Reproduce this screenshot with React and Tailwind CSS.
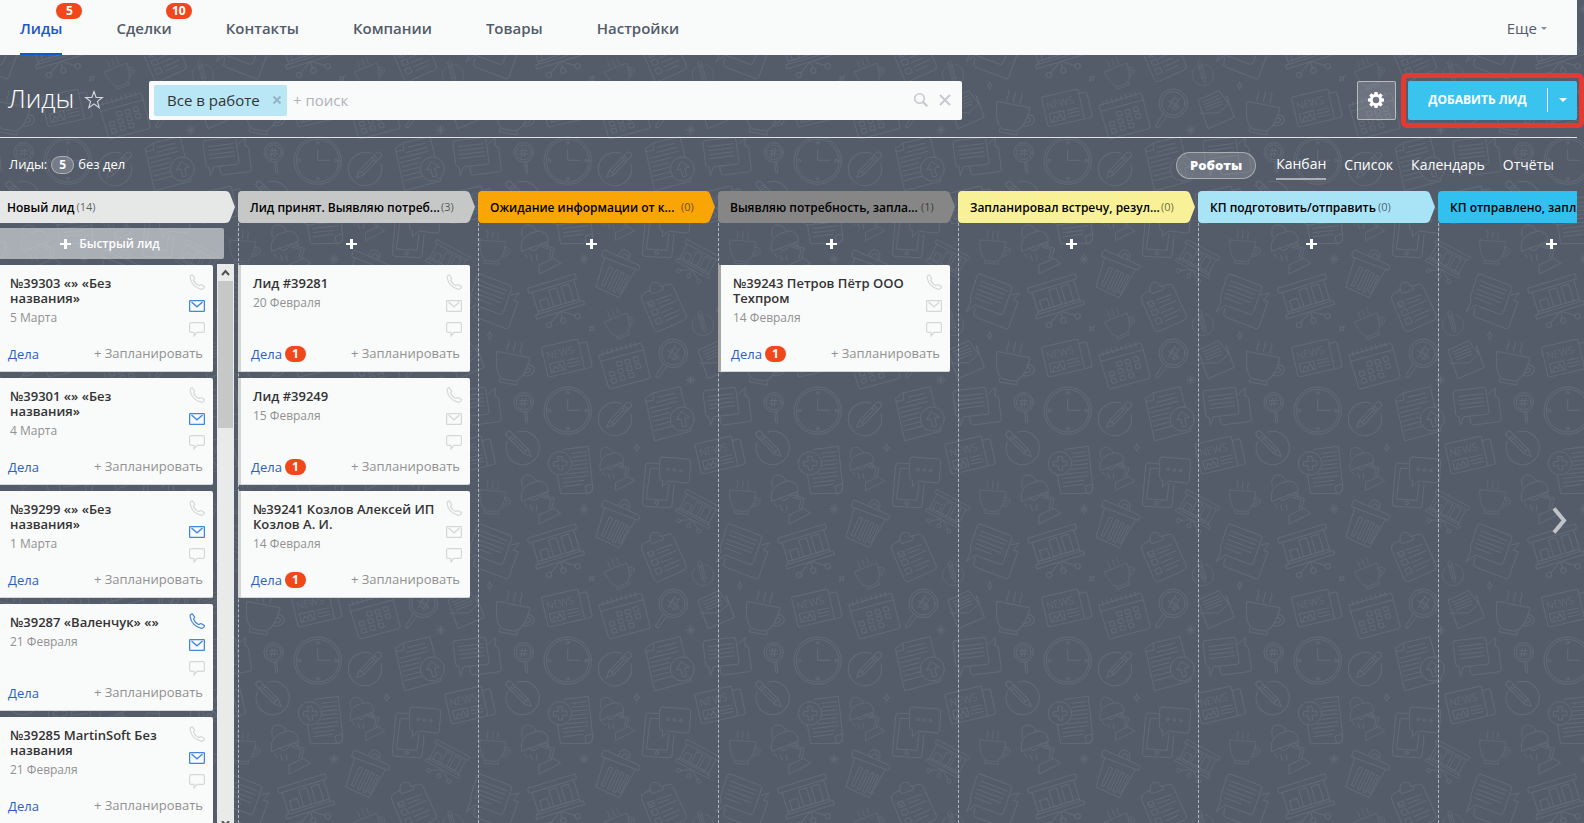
import clsx from "clsx";

const columns = [
  {
    key: "new",
    title: "Новый лид",
    count: 14,
    fill: "#e6e7e7",
    cards: [
      { id: 39303, title: "№39303 «» «Без названия»", date: "5 Марта", mail: true },
      { id: 39301, title: "№39301 «» «Без названия»", date: "4 Марта", mail: true },
      { id: 39299, title: "№39299 «» «Без названия»", date: "1 Марта", mail: true },
      { id: 39287, title: "№39287 «Валенчук» «»", date: "21 Февраля", mail: true, phone: true },
      { id: 39285, title: "№39285 MartinSoft Без названия", date: "21 Февраля", mail: true },
    ],
  },
  {
    key: "accepted",
    title: "Лид принят. Выявляю потреб...",
    long: true,
    count: 3,
    fill: "#c6c7c7",
    stripe: "border-l-[#d3d4d4]",
    cards: [
      { id: 39281, title: "Лид #39281", date: "20 Февраля", todo: 1 },
      { id: 39249, title: "Лид #39249", date: "15 Февраля", todo: 1 },
      { id: 39241, title: "№39241 Козлов Алексей ИП Козлов А. И.", date: "14 Февраля", todo: 1 },
    ],
  },
  { key: "waiting", title: "Ожидание информации от к...", long: true, count: 0, fill: "#faa506", cards: [] },
  {
    key: "needs",
    title: "Выявляю потребность, запла...",
    long: true,
    count: 1,
    fill: "#868686",
    stripe: "border-l-[#a5a5a5]",
    cards: [{ id: 39243, title: "№39243 Петров Пётр ООО Техпром", date: "14 Февраля", todo: 1 }],
  },
  { key: "meeting", title: "Запланировал встречу, резул...", long: true, count: 0, fill: "#f8f197", cards: [] },
  { key: "offer", title: "КП подготовить/отправить", count: 0, fill: "#a8e3f6", cards: [] },
  { key: "sent", title: "КП отправлено, запл...", long: true, count: 0, fill: "#30c1f1", cards: [] },
];

const nav = [
  { label: "Лиды", badge: 5, active: true },
  { label: "Сделки", badge: 10 },
  { label: "Контакты" },
  { label: "Компании" },
  { label: "Товары" },
  { label: "Настройки" },
];

/* ---------- Background doodles ---------- */
function News({ transform }) {
  return (
    <g transform={transform}>
      <path d="M4 0H108a4 4 0 0 1 4 4V92H8a8 8 0 0 1-8-8V4a4 4 0 0 1 4-4ZM112 14h20a4 4 0 0 1 4 4V84a8 8 0 0 1-8 8h-20" />
      <path d="M12 54h44v26H12ZM18 78l8-14 8 10 8-14 8 18M66 56h36M66 66h36M66 76h36" />
      <text x="9" y="40" fontSize="31" fontWeight="300" fill="#656e79" stroke="none">
        NEWS
      </text>
    </g>
  );
}

function Cup({ transform }) {
  return (
    <g transform={transform}>
      <path d="M2 0H98a3 3 0 0 1 3 4C98 40 90 72 66 78H34C12 72 4 40 0 4a3 3 0 0 1 2-4ZM24 78v10h54v-10" />
      <path d="M97 22c34-8 30 38-8 34M98 31c18-4 14 18-6 16M30-8c-8-10 6-18-2-30M50-8c-8-10 6-18-2-30M70-8c-8-10 6-18-2-30" />
    </g>
  );
}

function Lamp({ transform }) {
  return (
    <g transform={transform}>
      <path d="M2 78C-4 50 10 34 26 26l26-8c20 0 30 14 30 30ZM4 36C-2 10 8 0 20 0s22 8 26 18M26 68c0 12 24 12 34-12M72 54l10 12M72 54c6-8 14 6 8 10M62 66l28 8-6 26M62 60l38 10-8 30M54 146v-26l44-20 20 14ZM10 86l8 10M28 90l6 16M46 90l2 16" />
    </g>
  );
}

function Board({ transform }) {
  return (
    <g transform={transform}>
      <path d="M4 0H146a4 4 0 0 1 4 4v8a4 4 0 0 1-4 4H4a4 4 0 0 1-4-4V4a4 4 0 0 1 4-4ZM10 16V84M140 16V84M4 84H146a4 4 0 0 1 4 4v8H0v-8a4 4 0 0 1 4-4ZM10 76H140" />
      <path d="M24 46h24v30H24ZM60 24h24v52H60ZM98 24h24v52H98ZM75 98v18M70 98l-34 22M80 98l34 22" />
      <circle cx="75" cy="124" r="8" />
      <circle cx="30" cy="124" r="8" />
      <circle cx="120" cy="124" r="8" />
    </g>
  );
}

function Pencil({ transform }) {
  return (
    <g transform={transform}>
      <circle r="50" strokeDasharray="270 44" strokeDashoffset="56" />
      <path
        fill="#545c6a"
        d="M-9-58v74L0 36l9-20v-74a9 9 0 0 0-18 0ZM-9 14h18M-9-40H9M-9-48H9M0-36V12"
      />
    </g>
  );
}

function Doodles() {
  return (
    <g>
      <circle cx="131" cy="757" r="29" />
      <circle cx="131" cy="757" r="22" />
      <path d="M127 744l-3 26M136 744l-3 26M118 752h26M118 762h26M134 788l3 28a3 3 0 0 0 6-1l-3-28" />

      <circle cx="263" cy="782" r="71" />
      <circle cx="263" cy="782" r="64" />
      <path d="M263 748v33h38" />
      <circle cx="263" cy="728" r="4" />
      <circle cx="263" cy="836" r="4" />
      <circle cx="208" cy="782" r="4" />
      <circle cx="318" cy="782" r="4" />

      <Pencil transform="translate(405 807) rotate(44)" />
      <Pencil transform="translate(128 144) rotate(-45)" />
      <Pencil transform="translate(669 525) rotate(-15) scale(.64)" />

      <path d="M497 745l22-16 81-19 33 133-108 29ZM497 755l25-5-3-20M534 742l50-12M530 757l60-15M508 775l86-21M512 788l60-15M515 801l52-13M518 814l48-12M521 828l48-12M524 842l54-14" />
      <circle cx="607" cy="807" r="36" fill="#545c6a" />
      <path d="M603 785l-13 25 12-3 6 24 12-3-6-24 13-2Z" />

      <path d="M674 722l88-10q4 0 5 5l10 68q0 7-6 8l-70 7-10 27-4-26q-8 0-10-8l-8-63q0-6 5-8ZM685 740l74-9M686 752l74-9M688 764l74-9M690 776l74-9M774 733l22-20-1 25q10-1 11 8l8 62q0 6-6 7l-79 10q-6 0-7-8l-3-17" />

      <path d="M252 148l73-9 13 120M338 258q0 20-14 22l-82 1-10-57M338 266q0 14-18 16l-5-24 22-6M275 160l44-5M277 172l44-5M278 184l44-5M278 196l44-5M275 208l48-5M262 222l62-7M248 236l76-9M250 248l62-7M250 260l58-7" />
      <circle cx="240" cy="190" r="35" fill="#545c6a" />
      <path d="M234 169h12l1 15 14-1v13l-14 1 1 13h-12l-2-13-14 1v-13l14-1Z" />

      <Lamp transform="translate(359 142) scale(.88)" />
      <Lamp transform="translate(123 225)" />

      <path d="M540 191l-35-2q-7 0-8 8l-10 114q0 7 7 8l75 4q7 0 7-8l6-60M535 206l-24-1-12 92 62 4 6-50" />
      <circle cx="530" cy="309" r="5" />
      <path
        fill="#545c6a"
        d="M547 171l77 6q9 1 8 9l-4 56q-1 8-9 7l-54-6-18 17 1-18q-9-1-9-9l0-53q0-9 8-9Z"
      />
      <circle cx="564" cy="208" r="4" />
      <circle cx="583" cy="210" r="4" />
      <circle cx="602" cy="212" r="4" />

      <News transform="translate(644 133) rotate(-13)" />
      <News transform="translate(184 592) rotate(-13)" />

      <Cup transform="translate(749 270) rotate(4) scale(.78)" />
      <Cup transform="translate(51 604) rotate(11)" />
      <Cup transform="translate(373 516) rotate(-22) scale(.72)" />

      <path d="M376 301l100 44q5 3 3 8l-4 8-110-41 3-15q3-6 8-4ZM374 323l-26 88 70 32 48-84M388 352l-24 54 8 4 26-54ZM408 360l-26 56 8 4 26-56ZM424 368l-26 56 8 4 26-56ZM440 376l-26 50 8 4 24-50ZM416 316q6-20 20-16 20 6 12 28M424 320q6-12 14-8 10 6 4 14" />

      <Board transform="translate(142 415) rotate(-17)" />
      <Board transform="translate(620 268) rotate(28) scale(.76)" />

      <path d="M750 372l90 34q7 3 5 9l-25 73q-3 7-10 5l-75-28-26 20 14-32-2-12 20-62q3-8 9-7ZM752 393l80 30M748 405l76 28M742 418l76 28M738 430l74 28M734 443l50 19M844 435l24-6-18 22 14 4-28 78q-2 5-8 3l-90-34q-8-4-7-10l4-18" />

      <path d="M510 421l-18 9q-11 7-7 19l38 90q4 8 14 5l76-34q8-5 6-13l-40-88q-4-8-14-6l-20 6M510 421q-2-24 15-24 15 0 15 12 14-1 10 10l-34 12q-8-4-6-10" />
      <path d="M503 458l15-6 7 15-15 6ZM514 482l15-6 7 15-15 6ZM525 508l15-6 7 15-15 6ZM505 460l8 8 8-12M528 450l46-16M534 460l34-12M538 474l50-22M544 488l34-14M552 500l46-20M558 512l36-16" />

      <path d="M357 616l122-36q5 0 7 5l24 94q1 5-4 7l-112 30q-6 1-8-4l-28-92q-1-3-1-4ZM362 634l126-34M366 604l4 12M380 600l4 12M394 596l4 12M408 592l4 12M422 588l4 12M436 584l4 12M450 580l4 12M464 577l4 12" />
      <path d="M410 636l13-3 4 13-13 3ZM435 630l13-3 4 13-13 3ZM460 622l13-3 4 13-13 3ZM388 666l13-3 4 13-13 3ZM414 658l13-3 4 13-13 3ZM440 650l13-3 4 13-13 3ZM466 643l13-3 4 13-13 3ZM394 687l13-3 4 13-13 3ZM420 679l13-3 4 13-13 3ZM446 671l13-3 4 13-13 3Z" />

      <circle cx="580" cy="610" r="43" />
      <circle cx="580" cy="610" r="35" />
      <path d="M596 602l-12-10-10 10 22 16-10 12-18-14M586 588l-22 36M600 594l-22 36M564 602l34 24M549 643l-22 34q-1 8 8 6l25-34" />

      <path d="M656 600l-1 4 29 82 79-34-24-64M656 600l60-28 30 40-30 26-56 2M668 606l48-20M672 614l50-20M676 622l50-20M680 630l46-18M740 588l6 22" />

      <path d="M470 132l3 8 6 3-6 3-3 8-3-8-6-3 6-3ZM779 546l3 8 5 3-5 3-3 9-3-9-5-3 5-3ZM343 528l-4 8 2 6-6-3-7 5 3-8-2-6 6 2Z" />
      <path d="M312 314v26M299 327h26M303 318l18 18M321 318l-18 18M632 677v26M619 690h26M623 681l18 18M641 681l-18 18" />
    </g>
  );
}

function Backdrop() {
  return (
    <svg className="absolute inset-0 h-full w-full" aria-hidden="true">
      <defs>
        <pattern
          id="office"
          x="230"
          y="150"
          width="250"
          height="250"
          patternUnits="userSpaceOnUse"
          viewBox="0 0 750 750"
        >
          <g fill="none" stroke="#616a76" strokeWidth="3" strokeLinejoin="round" strokeLinecap="round">
            {[0, -750].map((x) =>
              [0, -750].map((y) => (
                <g key={`${x}${y}`} transform={`translate(${x} ${y})`}>
                  <Doodles />
                </g>
              ))
            )}
          </g>
        </pattern>
      </defs>
      <rect width="100%" height="100%" fill="url(#office)" />
    </svg>
  );
}

/* ---------- Icons ---------- */
function PhoneIcon() {
  return (
    <svg viewBox="0 0 16 16" className="size-4" fill="none" stroke="currentColor" strokeWidth="1.2">
      <path d="M1.2 3.8C.8 2.2 2 .9 3.3.8L5.6 4c.2.9-1.2 1.3-1 2.3.8 2.2 2.8 4.2 5 5.2 1 .2 1.4-1.2 2.4-1l3.3 2c.3 1.3-1.2 2.9-2.9 2.8C6.8 14.3 1.9 9.7 1.2 3.8Z" />
    </svg>
  );
}

function MailIcon() {
  return (
    <svg viewBox="0 0 16 12" className="h-3 w-4" fill="none" stroke="currentColor" strokeWidth="1.3">
      <rect x=".6" y=".6" width="14.8" height="10.8" rx="1" />
      <path d="m2.5 2 5.5 4.8L13.5 2" />
    </svg>
  );
}

function ChatIcon() {
  return (
    <svg viewBox="0 0 16 15" className="h-[15px] w-4" fill="none" stroke="currentColor" strokeWidth="1.2">
      <path d="M2 .6h12c.8 0 1.4.6 1.4 1.4v7c0 .8-.6 1.4-1.4 1.4H8L5 14v-3.6H2C1.2 10.4.6 9.8.6 9V2C.6 1.2 1.2.6 2 .6Z" />
    </svg>
  );
}

function PlusIcon() {
  return (
    <svg viewBox="0 0 11 10" className="h-2.5 w-[11px]" fill="#fff">
      <path d="M4 0h3v4h4v2H7v4H4V6H0V4h4Z" />
    </svg>
  );
}

function GearIcon() {
  return (
    <svg viewBox="-8 -8 16 16" className="size-4" fill="#fff">
      <circle r="4.6" fill="none" stroke="#fff" strokeWidth="2.8" />
      {[0, 45, 90, 135, 180, 225, 270, 315].map((a) => (
        <path key={a} d="M-2-5 -1.5-8H1.5L2-5Z" transform={`rotate(${a})`} />
      ))}
    </svg>
  );
}

/* ---------- Top bar ---------- */
function TopNav() {
  return (
    <header className="mr-[7px] flex h-[55px] items-stretch justify-between bg-[#f9fafa] pr-[30px] pl-5 text-[15px]">
      <nav className="flex gap-[54px]">
        {nav.map((n) => (
          <a
            key={n.label}
            href="#"
            className={clsx(
              "relative flex items-center border-b-2 border-transparent pt-1 font-semibold",
              n.active ? "border-b-[#1058d0] text-[#1f57c9]" : "text-[#535c69]"
            )}
          >
            {n.label}
            {n.badge && (
              <span className="absolute top-[3px] -right-5 flex h-4 w-[26px] items-center justify-center rounded-full bg-[#f1481b] text-xs font-bold text-white">
                {n.badge}
              </span>
            )}
          </a>
        ))}
      </nav>
      <button className="flex items-center gap-1 pt-0.5 text-[#535c69]">
        Еще
        <svg viewBox="0 0 6 3" className="h-[3px] w-1.5" fill="#868d95">
          <path d="M0 0h6L3 3Z" />
        </svg>
      </button>
    </header>
  );
}

function Toolbar() {
  return (
    <div className="mr-[7px] flex h-[83px] items-center border-b border-[#dfe2e5] pt-2">
      <h1 className="w-[76px] pb-1 pl-2 text-[26px] font-light text-white">Лиды</h1>
      <button aria-label="В избранное" className="mr-[45px] ml-2">
        <svg viewBox="0 0 20 20" className="size-5" fill="none" stroke="#d5d8dc" strokeWidth="1.1">
          <path d="m10 1.5 2.1 6h6.3l-5 3.9 1.8 6.2L10 14l-5.2 3.6 1.8-6.2-5-3.9h6.3Z" />
        </svg>
      </button>
      <div className="flex h-[39px] w-[813px] items-center rounded-xs bg-[#f9fafa] pr-[11px] pl-[5px] text-[15px]">
        <span className="flex h-[31px] w-[133px] shrink-0 items-center justify-between rounded-xs bg-[#b9e7f6] pr-[5px] pl-[13px] text-[#333]">
          Все в работе
          <button aria-label="Убрать фильтр">
            <svg viewBox="0 0 10 10" className="size-2.5" stroke="#92b5c6" strokeWidth="2">
              <path d="m1.5 1.5 7 7m0-7-7 7" />
            </svg>
          </button>
        </span>
        <input
          aria-label="Поиск"
          placeholder="+ поиск"
          className="min-w-0 flex-1 px-1.5 outline-none placeholder:text-[#b0b3b9]"
        />
        <button aria-label="Найти" className="mr-[11px]">
          <svg viewBox="0 0 14 14" className="size-3.5" fill="none" stroke="#c6c9cd" strokeWidth="1.6">
            <circle cx="5.5" cy="5.5" r="4.7" />
            <path d="m9 9 4.3 4.3" strokeWidth="2.2" />
          </svg>
        </button>
        <button aria-label="Очистить">
          <svg viewBox="0 0 12 12" className="size-3" stroke="#c6c9cd" strokeWidth="1.8">
            <path d="m1 1 10 10m0-10L1 11" />
          </svg>
        </button>
      </div>
      <button
        aria-label="Настройки"
        className="ml-auto flex size-[39px] shrink-0 items-center justify-center rounded-xs border border-white/50 bg-white/15 pr-px"
      >
        <GearIcon />
      </button>
      <div className="-mr-[7px] ml-[5px] flex h-[55px] w-[183px] shrink-0 rounded-md border-[5px] border-[#e53a2f] px-0.5 py-[3px]">
        <div className="flex flex-1 items-center rounded-xs bg-[#3bc3f0] text-xs font-bold text-white">
          <button className="h-full flex-1 text-center">ДОБАВИТЬ ЛИД</button>
          <button aria-label="Ещё варианты" className="flex h-6 w-[30px] items-center justify-center border-l border-white">
            <svg viewBox="0 0 8 4" className="h-1 w-2" fill="#fff">
              <path d="M0 0h8L4 4Z" />
            </svg>
          </button>
        </div>
      </div>
    </div>
  );
}

function SubBar() {
  return (
    <div className="flex h-[53px] items-center justify-between pt-px pr-[30px] pl-[9px] text-white">
      <div className="flex items-center gap-1 text-[13px]">
        Лиды:
        <span className="flex h-[18px] w-[23px] items-center justify-center rounded-full border border-white/40 bg-white/20 text-xs font-bold">
          5
        </span>
        без дел
      </div>
      <div className="flex items-center text-sm">
        <button className="mr-5 h-[27px] w-20 rounded-full border border-white/40 bg-white/15 text-[13px] font-extrabold">
          Роботы
        </button>
        <a href="#" className="mr-[18px] border-b-2 border-white/50 pt-1 pb-1">
          Канбан
        </a>
        <a href="#" className="mr-[18px]">
          Список
        </a>
        <a href="#" className="mr-[18px]">
          Календарь
        </a>
        <a href="#">Отчёты</a>
      </div>
    </div>
  );
}

/* ---------- Board ---------- */
function ColumnHeader({ column, first }) {
  return (
    <div className={clsx("flex h-8", first ? "w-[235px]" : "w-[237px]")}>
      <div
        className={clsx(
          "flex min-w-0 flex-1 items-center gap-0.5 pt-px text-xs",
          first ? "pl-[7px]" : "rounded-l-sm pl-3"
        )}
        style={{ backgroundColor: column.fill }}
      >
        <h2 className={clsx("font-semibold whitespace-nowrap text-black", column.long && "w-[189px]")}>
          {column.title}
        </h2>
        <span className="text-[11px] text-black/60">({column.count})</span>
      </div>
      <svg viewBox="0 0 10 32" className="h-8 w-2.5 shrink-0" fill={column.fill}>
        <path d="M0 0C3 0 4 1 5 3l5 13-5 13c-1 2-2 3-5 3Z" />
      </svg>
    </div>
  );
}

function Card({ card, stripe }) {
  return (
    <article
      className={clsx(
        "mb-1.5 flex h-[107px] shrink-0 flex-col justify-between rounded-r-xs border-b border-b-[#d5d8da] bg-[#f9fafa] pr-2",
        stripe ? ["border-l-[3px] pl-3", stripe] : "pl-2.5"
      )}
    >
      <div className="flex justify-between pt-[9px]">
        <div className={clsx("pt-0.5 leading-[15px]", stripe ? "w-[184px]" : "w-[164px]")}>
          <h3 className="text-[13px] leading-[15px] font-semibold text-[#333]">{card.title}</h3>
          <p className="mt-1 text-xs leading-[15px] text-[#919191]">{card.date}</p>
        </div>
        <div className="flex shrink-0 flex-col gap-2.5 text-[#d5d8d9]">
          <span className={clsx(card.phone && "text-[#3f86e0]")}>
            <PhoneIcon />
          </span>
          <span className={clsx(card.mail && "text-[#3f86e0]")}>
            <MailIcon />
          </span>
          <ChatIcon />
        </div>
      </div>
      <div className="-ml-0.5 flex items-end justify-between pr-0.5 pb-[7px] text-[13px]">
        <a href="#" className="flex items-center gap-[3px] text-[#2a5fc4]">
          Дела
          {card.todo && (
            <span className="flex h-4 w-[21px] items-center justify-center rounded-full bg-[#f1481b] text-xs font-bold text-white">
              {card.todo}
            </span>
          )}
        </a>
        <button className="pb-px text-[#919191]">+ Запланировать</button>
      </div>
    </article>
  );
}

function Scrollbar() {
  return (
    <div className="flex w-[17px] flex-col items-center bg-[#e9eaea]" aria-hidden="true">
      <svg viewBox="0 0 17 17" className="h-[17px] w-[17px] shrink-0" fill="none" stroke="#505050" strokeWidth="2">
        <path d="m5 11 3.5-4 3.5 4" />
      </svg>
      <div className="h-[147px] w-[15px] bg-[#c6c8c8]" />
      <svg viewBox="0 0 17 2" className="mt-auto h-0.5 w-[17px] shrink-0" fill="none" stroke="#505050" strokeWidth="2">
        <path d="m5 0 3.5 4 3.5-4" />
      </svg>
    </div>
  );
}

function FirstColumn({ column }) {
  return (
    <section className="flex w-[238px] shrink-0 flex-col">
      <ColumnHeader column={column} first />
      <button className="mt-[5px] flex h-[31px] w-56 shrink-0 items-center justify-center gap-2 rounded-r-xs bg-white/50 pr-1 text-xs font-semibold text-white">
        <PlusIcon />
        Быстрый лид
      </button>
      <div className="mt-[5px] flex min-h-0 flex-1 gap-1">
        <div className="flex w-[213px] flex-col overflow-hidden pt-px">
          {column.cards.map((c) => (
            <Card key={c.id} card={c} />
          ))}
        </div>
        <Scrollbar />
      </div>
    </section>
  );
}

function Column({ column }) {
  return (
    <section className="flex w-60 shrink-0 flex-col">
      <ColumnHeader column={column} />
      <div className="flex-1 border-l border-dashed border-[#b4b9be]">
        <button
          aria-label="Добавить лид"
          className="flex h-[42px] w-56 items-center justify-center"
        >
          <PlusIcon />
        </button>
        <div className="-ml-px w-[232px]">
          {column.cards.map((c) => (
            <Card key={c.id} card={c} stripe={column.stripe} />
          ))}
        </div>
      </div>
    </section>
  );
}

export default function App() {
  const [first, ...rest] = columns;

  return (
    <div className="relative h-screen overflow-hidden bg-[#545c6a] font-['Open_Sans','Noto_Sans',sans-serif]">
      <Backdrop />
      <div className="relative flex h-full flex-col">
        <TopNav />
        <Toolbar />
        <SubBar />
        <main className="relative mr-[7px] flex min-h-0 flex-1 overflow-hidden">
          <FirstColumn column={first} />
          {rest.map((c) => (
            <Column key={c.key} column={c} />
          ))}
          <button aria-label="Вперёд" className="absolute top-1/2 right-2.5">
            <svg viewBox="0 0 15 27" className="h-[27px] w-[15px]" fill="none" stroke="#c0c4ca" strokeWidth="4">
              <path d="M2 1.5 12 13.5 2 25.5" />
            </svg>
          </button>
        </main>
      </div>
    </div>
  );
}
